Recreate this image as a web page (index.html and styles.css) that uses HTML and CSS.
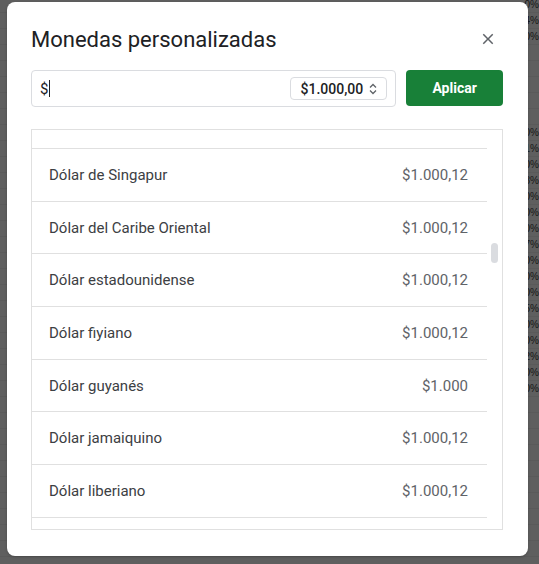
FILE: index.html
```html
<!DOCTYPE html>
<html lang="es">
<head>
<meta charset="utf-8">
<title>Monedas personalizadas</title>
<link rel="stylesheet" href="styles.css">
</head>
<body>
<div class="sheet">
  <div class="srow"><span>0%</span></div>
  <div class="srow"><span>4%</span></div>
  <div class="srow"><span>0%</span></div>
  <div class="srow"><span></span></div>
  <div class="srow"><span></span></div>
  <div class="srow"><span></span></div>
  <div class="srow"><span></span></div>
  <div class="srow"><span></span></div>
  <div class="srow"><span>0%</span></div>
  <div class="srow"><span>1%</span></div>
  <div class="srow"><span>0%</span></div>
  <div class="srow"><span>3%</span></div>
  <div class="srow"><span>0%</span></div>
  <div class="srow"><span>0%</span></div>
  <div class="srow"><span>0%</span></div>
  <div class="srow"><span>7%</span></div>
  <div class="srow"><span>0%</span></div>
  <div class="srow"><span>0%</span></div>
  <div class="srow"><span>0%</span></div>
  <div class="srow"><span>5%</span></div>
  <div class="srow"><span>0%</span></div>
  <div class="srow"><span>0%</span></div>
  <div class="srow"><span>2%</span></div>
  <div class="srow"><span>0%</span></div>
  <div class="srow"><span>0%</span></div>
  <div class="srow"><span></span></div>
  <div class="srow"><span></span></div>
  <div class="srow"><span></span></div>
  <div class="srow"><span></span></div>
  <div class="srow"><span></span></div>
  <div class="srow"><span></span></div>
  <div class="srow"><span></span></div>
  <div class="srow"><span></span></div>
  <div class="srow"><span></span></div>
  <div class="srow"><span></span></div>
</div>

<div class="dialog">
  <div class="header">
    <h1 class="title">Monedas personalizadas</h1>
    <button class="close" aria-label="Cerrar">
      <svg width="18" height="18" viewBox="0 0 24 24"><path d="M19 6.41 17.59 5 12 10.59 6.41 5 5 6.41 10.59 12 5 17.59 6.41 19 12 13.41 17.59 19 19 17.59 13.41 12z" fill="#5f6368"/></svg>
    </button>
  </div>

  <div class="controls">
    <div class="input">
      <span class="value">$</span><span class="caret"></span>
      <div class="spacer"></div>
      <div class="format">
        <span>$1.000,00</span>
        <svg width="10" height="16" viewBox="0 0 10 16"><path d="M2 6.5 5 3.5 8 6.5M2 9.5 5 12.5 8 9.5" fill="none" stroke="#5f6368" stroke-width="1.3"/></svg>
      </div>
    </div>
    <button class="apply">Aplicar</button>
  </div>

  <div class="list">
    <div class="rows">
      <div class="row top"></div>
      <div class="row"><span class="name">Dólar de Singapur</span><span class="amount">$1.000,12</span></div>
      <div class="row"><span class="name">Dólar del Caribe Oriental</span><span class="amount">$1.000,12</span></div>
      <div class="row"><span class="name">Dólar estadounidense</span><span class="amount">$1.000,12</span></div>
      <div class="row"><span class="name">Dólar fiyiano</span><span class="amount">$1.000,12</span></div>
      <div class="row"><span class="name">Dólar guyanés</span><span class="amount">$1.000</span></div>
      <div class="row"><span class="name">Dólar jamaiquino</span><span class="amount">$1.000,12</span></div>
      <div class="row"><span class="name">Dólar liberiano</span><span class="amount">$1.000,12</span></div>
      <div class="row"></div>
    </div>
    <div class="track"><div class="thumb"></div></div>
  </div>
</div>
</body>
</html>
```

FILE: styles.css
```css
* { box-sizing: border-box; }

html, body {
  margin: 0;
  height: 100%;
}

body {
  background: #5f5f5f;
  font-family: Roboto, "Noto Sans", Arial, sans-serif;
  overflow: hidden;
  position: relative;
}

.sheet {
  width: 539px;
  margin-top: -3px;
}

.srow {
  height: 16px;
  border-bottom: 1px solid #5a5a5a;
  display: flex;
  justify-content: flex-end;
  align-items: center;
  padding-right: 0;
  font-family: Arial, "Liberation Sans", sans-serif;
  font-size: 10px;
  color: #161616;
}

.dialog {
  position: absolute;
  left: 7px;
  top: 2px;
  width: 521px;
  height: 554px;
  background: #fff;
  border-radius: 8px;
  padding: 22px 25px 0 24px;
  display: flex;
  flex-direction: column;
  box-shadow: 0 1px 3px rgba(0,0,0,0.2);
}

.header {
  display: flex;
  align-items: center;
  justify-content: space-between;
}

.title {
  margin: 0;
  font-size: 22px;
  line-height: 32px;
  font-weight: 400;
  color: #202124;
}

.close {
  border: 0;
  background: none;
  padding: 0;
  width: 18px;
  height: 18px;
  margin-right: 6px;
  margin-top: -2px;
  display: flex;
}

.controls {
  margin-top: 14px;
  display: flex;
  gap: 10px;
  align-items: flex-start;
}

.input {
  width: 366px;
  height: 37px;
  border: 1px solid #dadce0;
  border-radius: 4px;
  display: flex;
  align-items: center;
  padding: 0 8px 0 8px;
}

.value {
  font-size: 15px;
  color: #202124;
}

.caret {
  width: 1px;
  height: 17px;
  background: #202124;
  margin-left: 1px;
}

.spacer { flex: 1; }

.format {
  height: 23px;
  border: 1px solid #dadce0;
  border-radius: 4px;
  display: flex;
  align-items: center;
  gap: 5px;
  padding: 0 8px 0 9px;
  font-size: 14px;
  font-weight: 500;
  color: #202124;
}

.apply {
  width: 97px;
  height: 36px;
  border: 0;
  border-radius: 4px;
  background: #188038;
  color: #fff;
  font-family: Roboto, Arial, sans-serif;
  font-size: 14px;
  font-weight: 700;
}

.list {
  margin-top: 22px;
  height: 401px;
  border: 1px solid #e0e0e0;
  display: flex;
  overflow: hidden;
}

.rows {
  width: 455px;
  flex: none;
}

.row {
  height: 52.7px;
  border-bottom: 1px solid #e0e0e0;
  display: flex;
  align-items: center;
  justify-content: space-between;
  padding: 0 19px 0 17px;
  font-size: 15px;
}

.row.top { height: 19px; }

.name { color: #3c4043; }
.amount { color: #5f6368; }

.track {
  flex: 1;
  padding: 113px 0 0 4px;
}

.thumb {
  width: 7px;
  height: 20px;
  border-radius: 4px;
  background: #dadce0;
}
```
